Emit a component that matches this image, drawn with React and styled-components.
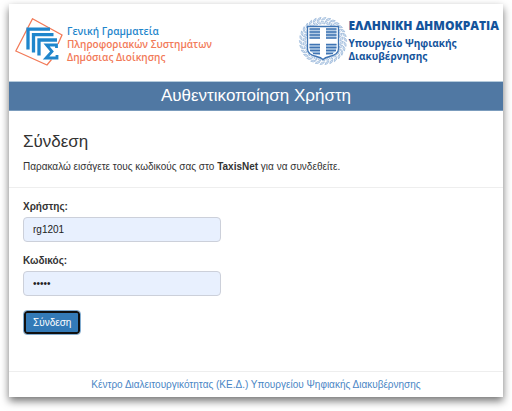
import styled, { createGlobalStyle } from "styled-components";

const leafCount = 30;
const laurelAngles = Array.from({ length: leafCount }, (_, i) => i * (360 / leafCount));

const AgencyLogo = () => (
  <svg width='48' height='48' viewBox='0 0 48 48' fill='none' aria-hidden='true'>
    <path d='M43 26 47 17 17.5 .8 .8 33 32 47 36.500 41.500' stroke='#f27a58' strokeWidth='1.3' />
    <path
      d='M13 31.500V11.200H35M18.500 34.500V16.600H38.500M24 37.500V22H42'
      stroke='#1f86cc'
      strokeWidth='3.3'
    />
    <path d='M41.500 30V27H31.500L37 33.500 31 40H42V37' stroke='#1f86cc' strokeWidth='2.8' />
  </svg>
);

const StateEmblem = () => (
  <svg width='50' height='50' viewBox='0 0 50 50' fill='none' aria-hidden='true'>
    {laurelAngles.map((angle) => (
      <g key={angle} transform={`rotate(${angle} 25 25)`}>
        <path d='M23.500 4Q25 1 28 1.500Q27 4.500 23.500 4Z' fill='#d5e2f1' stroke='#9dbadb' strokeWidth='.7' />
        <path d='M23 5Q26 4.500 27 8Q24 8.500 23 5Z' fill='#e6eef7' stroke='#8aacd4' strokeWidth='.6' />
      </g>
    ))}
    <path
      d='M9.500 10.500H40.500V33C40.500 38 36 39.500 31.500 40.500Q27 41.500 25 43.500Q23 41.500 18.500 40.500C14 39.500 9.500 38 9.500 33Z'
      fill='#fff'
      stroke='#3f74b3'
      strokeWidth='1.3'
    />
    <path
      d='M11.500 12.500H22V22.500H11.500ZM28 12.500H38.500V22.500H28ZM11.500 28H22V39Q11.500 38 11.500 32ZM28 28H38.500V32Q38.500 38 28 39Z'
      fill='#b4cce6'
    />
    <path
      d='M11.500 13H22M11.500 16H22M11.500 19H22M11.500 22H22M28 13H38.500M28 16H38.500M28 19H38.500M28 22H38.500M11.500 28.500H22M11.500 31.500H22M12 34.500H22M15 37.500H22M28 28.500H38.500M28 31.500H38.500M28 34.500H38M28 37.500H35'
      stroke='#3f74b3'
      strokeWidth='1.3'
    />
  </svg>
);

const App = () => {
  return (
    <>
      <GlobalStyle />
      <Page>
        <Header>
          <Brand>
            <AgencyLogo />
            <AgencyName>
              <span>Γενική Γραμματεία</span>
              <br />
              Πληροφοριακών Συστημάτων
              <br />
              Δημόσιας Διοίκησης
            </AgencyName>
          </Brand>
          <Brand>
            <StateEmblem />
            <StateName>
              <strong>ΕΛΛΗΝΙΚΗ ΔΗΜΟΚΡΑΤΙΑ</strong>
              <p>
                Υπουργείο Ψηφιακής
                <br />
                Διακυβέρνησης
              </p>
            </StateName>
          </Brand>
        </Header>
        <TitleBar>Αυθεντικοποίηση Χρήστη</TitleBar>
        <Intro>
          <h2>Σύνδεση</h2>
          <p>
            Παρακαλώ εισάγετε τους κωδικούς σας στο <b>TaxisNet</b> για να συνδεθείτε.
          </p>
        </Intro>
        <LoginForm onSubmit={(e) => e.preventDefault()}>
          <Field>
            <label htmlFor='username'>Χρήστης:</label>
            <input id='username' type='text' defaultValue='rg1201' />
          </Field>
          <Field>
            <label htmlFor='password'>Κωδικός:</label>
            <input id='password' type='password' defaultValue='12345' />
          </Field>
          <SubmitButton type='submit'>Σύνδεση</SubmitButton>
        </LoginForm>
        <Footer>
          <a href='#ked'>Κέντρο Διαλειτουργικότητας (ΚΕ.Δ.) Υπουργείου Ψηφιακής Διακυβέρνησης</a>
        </Footer>
      </Page>
    </>
  );
};

export default App;

const GlobalStyle = createGlobalStyle`
  * {
    box-sizing: border-box;
  }
  body {
    margin: 0;
    background-color: #fff;
    color: #333;
    font-family: "Liberation Sans", Arial, sans-serif;
    font-size: 10px;
    line-height: 16px;
  }
  h1, h2, p {
    margin: 0;
    font-weight: 400;
  }
`;

const Page = styled.div`
  margin: 4px 9px 14px;
  background-color: #fff;
  box-shadow: 0 4px 8px rgba(0, 0, 0, 0.55);
`;

const Header = styled.header`
  display: flex;
  justify-content: space-between;
  padding: 12px 4px 15px 6px;
`;

const Brand = styled.div`
  display: flex;
  align-items: flex-end;
`;

const AgencyName = styled.p`
  padding: 0 0 2px 4px;
  color: #f27a58;
  font-family: "Open Sans", sans-serif;
  font-size: 10px;
  font-weight: 600;
  line-height: 13px;
  white-space: nowrap;
  span {
    color: #1f86cc;
  }
`;

const StateName = styled.div`
  align-self: flex-start;
  color: #14549c;
  font-family: "Open Sans", sans-serif;
  font-size: 10px;
  font-weight: 700;
  line-height: 13px;
  white-space: nowrap;
  strong {
    display: block;
    font-size: 12px;
    line-height: 20px;
  }
  p {
    padding-top: 1px;
    font-weight: 700;
  }
`;

const TitleBar = styled.h1`
  background-color: #5078a3;
  border-top: 1px solid #b5cbdc;
  border-bottom: 1px solid #7b9cbd;
  color: #fff;
  font-size: 17px;
  line-height: 28px;
  text-align: center;
`;

const Intro = styled.section`
  padding: 19px 14px 12px;
  border-bottom: 1px solid #eee;
  h2 {
    font-size: 17px;
    line-height: 24px;
    margin-bottom: 5px;
  }
`;

const LoginForm = styled.form`
  padding: 11px 14px 37px;
`;

const Field = styled.div`
  width: 40%;
  min-width: 198px;
  margin-bottom: 11px;
  label {
    display: block;
    margin-bottom: 2px;
    font-weight: 700;
  }
  input {
    width: 100%;
    height: 25px;
    padding: 0 9px;
    border: 1px solid #ccd0da;
    border-radius: 4px;
    background-color: #e8f0fe;
    color: #222;
    font: inherit;
  }
`;

const SubmitButton = styled.button`
  height: 23px;
  margin: 4px 1px 0;
  padding: 0 7px;
  border: 2px solid #101010;
  border-radius: 3px;
  outline: 1px solid #84add0;
  background-color: #337ab7;
  color: #fff;
  font: inherit;
  cursor: pointer;
`;

const Footer = styled.footer`
  padding: 5px 14px 4px;
  border-top: 1px solid #eee;
  text-align: center;
  a {
    color: #4a86c5;
    text-decoration: none;
  }
`;
